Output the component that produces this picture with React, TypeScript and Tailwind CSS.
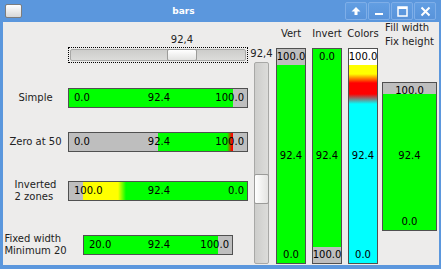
import React from 'react'

type HBarProps = {
  className: string
  start: number
  end: number
  inner: number
  fill: string
  labels: [string, string, string]
}

function HBar({ className, start, end, inner, fill, labels }: HBarProps) {
  return (
    <div className={`relative h-[20px] shrink-0 border border-[#505050] bg-[#bebebe] ${className}`}>
      <div className="flex h-full">
        <div style={{ width: inner * start }} />
        <div className={fill} style={{ width: inner * (end - start) }} />
      </div>
      <div className="absolute inset-0 grid grid-cols-[1fr_auto_1fr] items-center pl-[5px] pr-[3px] text-black">
        <span>{labels[0]}</span>
        <span>{labels[1]}</span>
        <span className="text-right">{labels[2]}</span>
      </div>
    </div>
  )
}

type VBarProps = {
  className: string
  frac: number
  fill: string
  empty?: string
  invert?: boolean
  labels: [string, string, string]
}

function VBar({ className, frac, fill, empty = 'bg-[#bebebe]', invert, labels }: VBarProps) {
  return (
    <div className={`relative flex flex-col border border-[#505050] ${empty} ${className}`}>
      <div className={`${invert ? 'mb-auto' : 'mt-auto'} ${fill}`} style={{ height: `${frac * 100}%` }} />
      <div className="absolute inset-0 flex flex-col items-center justify-between py-[2px] text-black">
        <span>{labels[0]}</span>
        <span>{labels[1]}</span>
        <span>{labels[2]}</span>
      </div>
    </div>
  )
}

function RowLabel({ lines }: { lines: string[] }) {
  return (
    <div className="flex w-[65px] shrink-0 justify-center">
      <div className="text-left">
        {lines.map((l) => (
          <div key={l}>{l}</div>
        ))}
      </div>
    </div>
  )
}

function WinButton({ children }: { children: React.ReactNode }) {
  return (
    <div className="flex h-[18px] w-[22px] items-center justify-center rounded-[2px] border border-[#7eaee8] bg-gradient-to-b from-[#629ee2] to-[#5893da]">
      {children}
    </div>
  )
}

function TitleBar() {
  return (
    <div className="flex h-[22px] shrink-0 items-center">
      <div className="ml-[5px] h-[14px] w-[17px] rounded-[2px] border border-[#7d7d7d] bg-gradient-to-b from-white to-[#d8d8d8]" />
      <div className="flex-1 text-center text-[9px] font-bold text-white">bars</div>
      <div className="mr-[5px] flex gap-px">
        <WinButton>
          <svg width="10" height="10" viewBox="0 0 10 10">
            <path d="M5 1 L9.5 5.5 H6.5 V9 H3.5 V5.5 H0.5 Z" fill="white" />
          </svg>
        </WinButton>
        <WinButton>
          <svg width="10" height="10" viewBox="0 0 10 10">
            <rect x="1" y="7" width="8" height="2" fill="white" />
          </svg>
        </WinButton>
        <WinButton>
          <svg width="11" height="11" viewBox="0 0 11 11">
            <rect x="1" y="1" width="9" height="9" fill="none" stroke="white" strokeWidth="1.5" />
            <rect x="1" y="1" width="9" height="2" fill="white" />
          </svg>
        </WinButton>
        <WinButton>
          <svg width="11" height="11" viewBox="0 0 11 11">
            <path d="M1.5 1.5 L9.5 9.5 M9.5 1.5 L1.5 9.5" stroke="white" strokeWidth="2" />
          </svg>
        </WinButton>
      </div>
    </div>
  )
}

export default function App() {
  return (
    <div className="flex h-[269px] w-[441px] flex-col bg-[#5b97dd] font-['DejaVu_Sans',sans-serif] text-[10px] leading-[12px] text-[#222]">
      <TitleBar />
      <div className="mb-[4px] ml-[3px] mr-[2px] flex flex-1 bg-[#edeceb]">
        {/* slider + horizontal bars */}
        <div className="flex w-[247px] shrink-0 flex-col pt-[12px]">
          <div className="ml-[65px] w-[180px]">
            <div className="ml-[99px] w-[30px] text-center">92,4</div>
            <div className="mt-[1px] h-[16px] border border-dotted border-black p-px">
              <div className="relative h-full rounded-[2px] border border-[#a8a8a6] bg-gradient-to-b from-[#cdcdcb] to-[#dcdcda]">
                <div className="absolute -top-px -bottom-px left-[96px] w-[30px] rounded-[2px] border border-[#9b9b99] bg-gradient-to-b from-white to-[#e4e4e2]" />
              </div>
            </div>
          </div>

          <div className="mt-[25px] flex items-center">
            <RowLabel lines={['Simple']} />
            <HBar className="w-[180px]" inner={178} start={0} end={0.924} fill="bg-[#00ff00]" labels={['0.0', '92.4', '100.0']} />
          </div>

          <div className="mt-[24px] flex items-center">
            <RowLabel lines={['Zero at 50']} />
            <HBar
              className="w-[180px]"
              inner={178}
              start={0.5}
              end={0.924}
              fill="bg-[linear-gradient(to_right,#00ff00_69px,#ff0000_74px)]"
              labels={['0.0', '92.4', '100.0']}
            />
          </div>

          <div className="mt-[27px] flex items-center">
            <RowLabel lines={['Inverted', '2 zones']} />
            <HBar
              className="w-[180px]"
              inner={178}
              start={0.076}
              end={1}
              fill="bg-[linear-gradient(to_right,#ffff00_35px,#00ff00_43px)]"
              labels={['100.0', '92.4', '0.0']}
            />
          </div>

          <div className="mt-[30px] flex items-center">
            <RowLabel lines={['Fixed width', 'Minimum 20']} />
            <HBar className="ml-[15px] w-[150px]" inner={148} start={0} end={0.905} fill="bg-[#00ff00]" labels={['20.0', '92.4', '100.0']} />
          </div>
        </div>

        {/* vertical slider */}
        <div className="flex w-[23px] shrink-0 flex-col items-center pt-[26px] pb-px">
          <div>92,4</div>
          <div className="relative mt-[2px] w-[15px] flex-1 rounded-[2px] border border-[#a8a8a6] bg-gradient-to-r from-[#cdcdcb] to-[#dcdcda]">
            <div className="absolute top-[111px] -right-px -left-px h-[30px] rounded-[2px] border border-[#9b9b99] bg-gradient-to-r from-white to-[#e4e4e2]" />
          </div>
        </div>

        {/* vertical bars */}
        <div className="ml-[3px] flex">
          <div className="flex w-[30px] flex-col">
            <div className="flex h-[26px] items-center justify-center pb-[2px]">Vert</div>
            <VBar className="h-[216px]" frac={0.924} fill="bg-[#00ff00]" labels={['100.0', '92.4', '0.0']} />
          </div>
          <div className="ml-[6px] flex w-[30px] flex-col">
            <div className="flex h-[26px] items-center justify-center pb-[2px]">Invert</div>
            <VBar className="h-[216px]" frac={0.924} invert fill="bg-[#00ff00]" labels={['0.0', '92.4', '100.0']} />
          </div>
          <div className="ml-[6px] flex w-[30px] flex-col">
            <div className="flex h-[26px] items-center justify-center pb-[2px]">Colors</div>
            <VBar
              className="h-[216px]"
              frac={0.924}
              empty="bg-white"
              fill="bg-[linear-gradient(to_bottom,#ffff00_9px,#ff0000_18px,#ff0000_29px,#00ffff_39px)]"
              labels={['100.0', '92.4', '0.0']}
            />
          </div>
          <div className="ml-[4px] flex w-[55px] flex-col">
            <div className="flex h-[26px] items-center justify-center">
              <div className="text-left leading-[14px]">
                <div>Fill width</div>
                <div>Fix height</div>
              </div>
            </div>
            <div className="flex h-[216px] items-center">
              <VBar className="h-[149px] w-full" frac={0.924} fill="bg-[#00ff00]" labels={['100.0', '92.4', '0.0']} />
            </div>
          </div>
        </div>
      </div>
    </div>
  )
}
